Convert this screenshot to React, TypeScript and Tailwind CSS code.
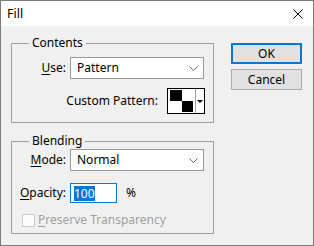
import React from "react"

function Chevron() {
  return (
    <svg width="9" height="5" viewBox="0 0 9 5" className="shrink-0">
      <path d="M0.5 0.5 L4.5 4.5 L8.5 0.5" fill="none" stroke="#6a6a6a" strokeWidth="1" />
    </svg>
  )
}

function Select({ value }: { value: string }) {
  return (
    <div className="ml-[4px] w-[134px] h-[22px] bg-white border border-[#9a9a9a] flex items-center justify-between pl-[6px] pr-[5px]">
      <span>{value}</span>
      <Chevron />
    </div>
  )
}

function Label({ k, rest }: { k: string; rest: string }) {
  return (
    <span className="w-[54px] text-right shrink-0">
      <span className="underline underline-offset-2">{k}</span>
      {rest}
    </span>
  )
}

export default function App() {
  return (
    <div className="w-[314px] h-[246px] border border-[#7a7a7a] bg-[#f0f0f0] flex flex-col font-['Noto_Sans',sans-serif] text-[12px] leading-[16px] text-black overflow-hidden">
      {/* title bar */}
      <div className="h-[25px] bg-white flex items-center justify-between pl-[6px] pr-[10px] shrink-0">
        <span className="text-[12.5px]">Fill</span>
        <svg width="10" height="10" viewBox="0 0 10 10">
          <path d="M0.5 0.5 L9.5 9.5 M9.5 0.5 L0.5 9.5" stroke="#000" strokeWidth="1" />
        </svg>
      </div>

      <div className="flex-1 flex pt-[9px] pl-[10px]">
        <div className="w-[203px] flex flex-col gap-[10px]">
          <fieldset className="border border-[#a0a0a0] pt-[6px] pb-[8px]">
            <legend className="ml-[17px] px-[3px] leading-[16px]">Contents</legend>
            <div className="flex items-center h-[22px]">
              <Label k="U" rest="se:" />
              <Select value="Pattern" />
            </div>
            <div className="mt-[9px] flex items-center justify-end gap-[9px] pr-[8px]">
              <span>Custom Pattern:</span>
              <div className="w-[38px] h-[26px] border border-black bg-white flex">
                <div className="w-[27px] px-[2px] py-[1px] grid grid-cols-2 grid-rows-2">
                  <div className="bg-black" />
                  <div className="bg-white" />
                  <div className="bg-white" />
                  <div className="bg-black" />
                </div>
                <div className="flex-1 border-l border-[#a0a0a0] flex items-center justify-center">
                  <div className="w-0 h-0 border-l-[3px] border-r-[3px] border-t-[3px] border-l-transparent border-r-transparent border-t-black" />
                </div>
              </div>
            </div>
          </fieldset>

          <fieldset className="border border-[#a0a0a0] pt-0 pb-[5px]">
            <legend className="ml-[17px] px-[3px] leading-[16px]">Blending</legend>
            <div className="flex items-center h-[22px]">
              <Label k="M" rest="ode:" />
              <Select value="Normal" />
            </div>
            <div className="mt-[12px] flex items-center h-[20px]">
              <Label k="O" rest="pacity:" />
              <div className="ml-[4px] w-[47px] h-[20px] bg-white border border-[#0078d7] flex items-center pl-[3px]">
                <span className="bg-[#0078d7] text-white leading-[15px]">100</span>
              </div>
              <span className="ml-[9px]">%</span>
            </div>
            <div className="mt-[9px] flex items-center h-[16px] pl-[10px] text-[#a0a0a0]">
              <div className="w-[13px] h-[13px] border border-[#cccccc] bg-[#fcfcfc]" />
              <span className="ml-[3px]">
                <span className="underline underline-offset-2">P</span>reserve Transparency
              </span>
            </div>
          </fieldset>
        </div>

        <div className="ml-[17px] mt-[8px] flex flex-col gap-[5px]">
          <button className="w-[71px] h-[21px] border-2 border-[#0078d7] bg-[#e1e1e1] flex items-center justify-center leading-[16px]">
            OK
          </button>
          <button className="w-[71px] h-[21px] border border-[#adadad] bg-[#e1e1e1] flex items-center justify-center leading-[16px]">
            Cancel
          </button>
        </div>
      </div>
    </div>
  )
}
